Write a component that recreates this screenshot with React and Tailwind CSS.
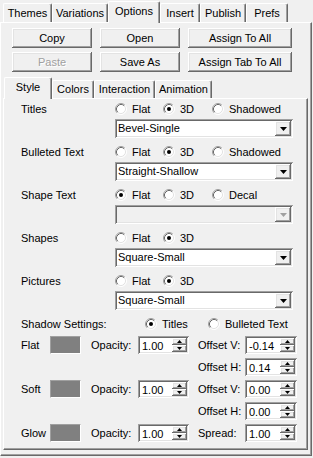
import React from "react";

const raised =
  "shadow-[inset_-1px_-1px_#696969,inset_1px_1px_#ffffff,inset_-2px_-2px_#a0a0a0,inset_2px_2px_#e3e3e3]";
const sunken =
  "shadow-[inset_1px_1px_#a0a0a0,inset_-1px_-1px_#ffffff,inset_2px_2px_#696969,inset_-2px_-2px_#e3e3e3]";

const Tab = ({ label, w, active }) => (
  <div
    className={`${w} flex items-center justify-center border-t border-l border-r border-t-white border-l-white border-r-[#696969] rounded-t-[2px] shadow-[inset_-1px_0_#a0a0a0] ${
      active ? "h-[22px] -mb-px relative z-10 bg-[#f0f0f0] pb-[2px]" : "h-[19px]"
    }`}
  >
    {label}
  </div>
);

const SubTab = ({ label, w, active }) => (
  <div
    className={`${w} flex items-center justify-center border-t border-l border-r border-t-white border-l-white border-r-[#696969] rounded-t-[2px] shadow-[inset_-1px_0_#a0a0a0] ${
      active ? "h-[22px] -mb-px relative z-10 bg-[#f0f0f0] pb-[2px]" : "h-[18px]"
    }`}
  >
    {label}
  </div>
);

const Button = ({ label, disabled }) => (
  <div
    className={`h-[20px] flex items-center justify-center bg-[#f0f0f0] ${raised} ${
      disabled ? "text-[#a0a0a0] [text-shadow:1px_1px_0_#ffffff]" : ""
    }`}
  >
    {label}
  </div>
);

const RadioDot = ({ on }) => (
  <svg width="12" height="12" viewBox="0 0 12 12" className="shrink-0">
    <circle cx="6" cy="6" r="5" fill="#ffffff" />
    <path d="M2.11 9.89A5.5 5.5 0 0 1 9.89 2.11" stroke="#a0a0a0" fill="none" />
    <path d="M9.89 2.11A5.5 5.5 0 0 1 2.11 9.89" stroke="#ffffff" fill="none" />
    <path d="M2.82 9.18A4.5 4.5 0 0 1 9.18 2.82" stroke="#696969" fill="none" />
    <path d="M9.18 2.82A4.5 4.5 0 0 1 2.82 9.18" stroke="#e3e3e3" fill="none" />
    {on && <circle cx="6" cy="6" r="2" fill="#000000" />}
  </svg>
);

const Radio = ({ label, on, w }) => (
  <div className={`${w} flex items-center gap-[5px]`}>
    <RadioDot on={on} />
    <span>{label}</span>
  </div>
);

const Dropdown = ({ value, disabled }) => (
  <div
    className={`ml-[111px] w-[178px] h-[19px] flex items-center justify-between p-[2px] ${sunken} ${
      disabled ? "bg-[#f0f0f0]" : "bg-white"
    }`}
  >
    <span className="pl-[1px]">{value}</span>
    <div className={`w-[16px] h-full flex items-center justify-center bg-[#f0f0f0] ${raised}`}>
      <svg width="7" height="4" viewBox="0 0 7 4">
        <polygon points="0,0 7,0 3.5,4" fill={disabled ? "#a0a0a0" : "#000000"} />
      </svg>
    </div>
  </div>
);

const Spinner = ({ value, w }) => (
  <div className={`${w} h-[18px] flex items-stretch bg-white p-[2px] ${sunken}`}>
    <span className="flex-1 flex items-center pl-[2px] pt-[2px]">{value}</span>
    <div className="w-[15px] flex flex-col">
      <div className={`flex-1 flex items-center justify-center bg-[#f0f0f0] ${raised}`}>
        <svg width="5" height="3" viewBox="0 0 5 3">
          <polygon points="0,3 5,3 2.5,0" fill="#000000" />
        </svg>
      </div>
      <div className={`flex-1 flex items-center justify-center bg-[#f0f0f0] ${raised}`}>
        <svg width="5" height="3" viewBox="0 0 5 3">
          <polygon points="0,0 5,0 2.5,3" fill="#000000" />
        </svg>
      </div>
    </div>
  </div>
);

const Swatch = () => (
  <div className="w-[31px] h-[18px] bg-[#808080] border-t border-l border-t-[#a0a0a0] border-l-[#a0a0a0] border-b border-r border-b-white border-r-white" />
);

const Group = ({ label, options, checked, value, disabled }) => (
  <div className="flex flex-col">
    <div className="h-[20px] flex items-center pl-[17px]">
      <span className="w-[94px]">{label}</span>
      {options.map((o, i) => (
        <Radio
          key={o}
          label={o}
          on={i === checked}
          w={i === 0 ? "w-[48px]" : i === 1 ? "w-[49px]" : "w-[80px]"}
        />
      ))}
    </div>
    <Dropdown value={value} disabled={disabled} />
  </div>
);

const ShadowRow = ({ label, right, rightValue }) => (
  <div className="h-[18px] flex items-center pl-[17px]">
    <span className="w-[29px]">{label}</span>
    <Swatch />
    <span className="ml-[10px] w-[47px]">Opacity:</span>
    <Spinner value="1.00" w="w-[51px]" />
    <span className="ml-[9px] w-[47px]">{right}</span>
    <Spinner value={rightValue} w="w-[52px]" />
  </div>
);

const OffsetRow = ({ value }) => (
  <div className="h-[18px] flex items-center pl-[17px]">
    <div className="w-[177px]" />
    <span className="w-[47px]">Offset H:</span>
    <Spinner value={value} w="w-[52px]" />
  </div>
);

export default function App() {
  return (
    <div className="w-[313px] h-[458px] bg-[#f0f0f0] overflow-hidden font-['Liberation_Sans',Arial,sans-serif] text-[11px] leading-[13px] text-black">
      <div className="h-[22px] flex items-end pl-[3px]">
        <Tab label="Themes" w="w-[49px]" />
        <Tab label="Variations" w="w-[56px]" />
        <Tab label="Options" w="w-[52px]" active />
        <Tab label="Insert" w="w-[40px]" />
        <Tab label="Publish" w="w-[46px]" />
        <Tab label="Prefs" w="w-[42px]" />
      </div>

      <div className="w-[312px] h-[434px] border border-t-white border-l-white border-r-[#696969] border-b-[#696969] shadow-[inset_-1px_-1px_#a0a0a0]">
        <div className="ml-[11px] mt-[5px] grid grid-cols-[80px_80px_104px] gap-x-[8px] gap-y-[4px]">
          <Button label="Copy" />
          <Button label="Open" />
          <Button label="Assign To All" />
          <Button label="Paste" disabled />
          <Button label="Save As" />
          <Button label="Assign Tab To All" />
        </div>

        <div className="mt-[5px] ml-[2px] h-[21px] flex items-end pl-[1px]">
          <SubTab label="Style" w="w-[48px]" active />
          <SubTab label="Colors" w="w-[42px]" />
          <SubTab label="Interaction" w="w-[61px]" />
          <SubTab label="Animation" w="w-[57px]" />
        </div>

        <div className="ml-[2px] w-[305px] h-[352px] border border-t-white border-l-white border-r-[#696969] border-b-[#696969] shadow-[inset_-1px_-1px_#a0a0a0] flex flex-col gap-[4px]">
          <Group label="Titles" options={["Flat", "3D", "Shadowed"]} checked={1} value="Bevel-Single" />
          <Group label="Bulleted Text" options={["Flat", "3D", "Shadowed"]} checked={1} value="Straight-Shallow" />
          <Group label="Shape Text" options={["Flat", "3D", "Decal"]} checked={0} value="" disabled />
          <Group label="Shapes" options={["Flat", "3D"]} checked={1} value="Square-Small" />
          <Group label="Pictures" options={["Flat", "3D"]} checked={1} value="Square-Small" />

          <div className="h-[20px] flex items-center pl-[17px]">
            <span className="w-[124px]">Shadow Settings:</span>
            <Radio label="Titles" on w="w-[63px]" />
            <Radio label="Bulleted Text" w="w-[90px]" />
          </div>

          <div className="-mt-[2px] flex flex-col gap-[4px]">
            <ShadowRow label="Flat" right="Offset V:" rightValue="-0.14" />
            <OffsetRow value="0.14" />
            <ShadowRow label="Soft" right="Offset V:" rightValue="0.00" />
            <OffsetRow value="0.00" />
            <ShadowRow label="Glow" right="Spread:" rightValue="1.00" />
          </div>
        </div>
      </div>
    </div>
  );
}
